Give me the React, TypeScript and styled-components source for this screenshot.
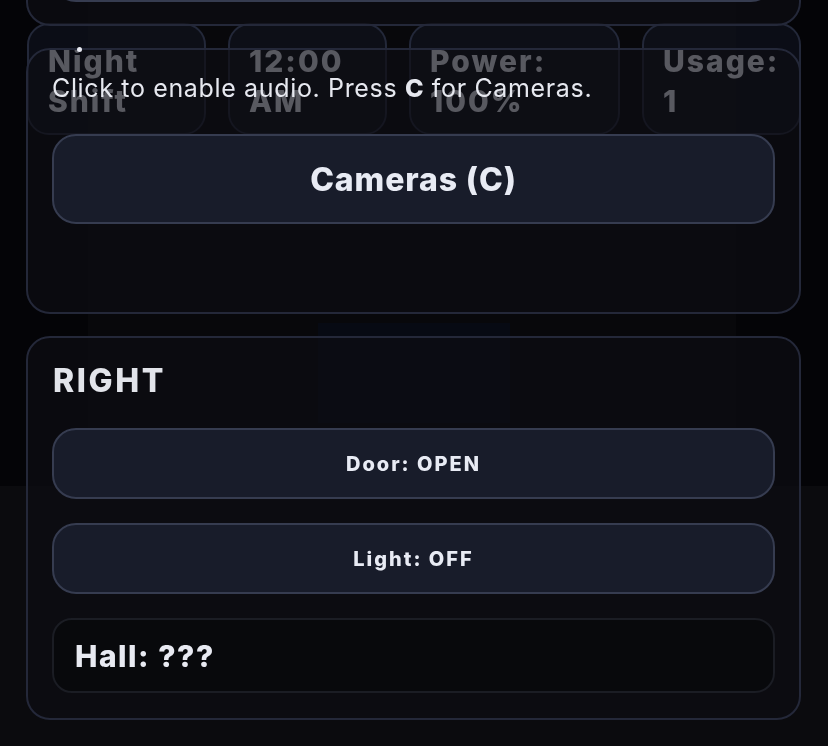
import React from "react";
import styled, { createGlobalStyle } from "styled-components";

const Global = createGlobalStyle`
  html, body { margin: 0; padding: 0; background: #040407; }
  body { font-family: Inter, "Noto Sans", "Liberation Sans", sans-serif; color: #e8eaf2; overflow: hidden; }
  * { box-sizing: border-box; }
`;

const Scene = styled.svg`
  position: fixed;
  inset: 0;
  width: 828px;
  height: 746px;
  z-index: 0;
`;

const Page = styled.main`
  position: relative;
  z-index: 1;
  height: 746px;
  padding: 0 27px 0 26px;
  display: flex;
  flex-direction: column;
`;

const Panel = styled.section`
  position: relative;
  z-index: 2;
  border: 2px solid #242839;
  border-radius: 24px;
  background: rgba(13, 14, 19, 0.66);
  padding: 24px;
  display: flex;
  flex-direction: column;
`;

const TopPanel = styled(Panel)`
  margin-top: -140px;
  height: 166px;
  justify-content: flex-end;
  padding-bottom: 22px;
`;

const CamPanel = styled(Panel)`
  margin-top: 22px;
  padding: 24px 24px 88px 24px;
`;

const SidePanel = styled(Panel)`
  margin-top: 22px;
  padding-bottom: 25px;
`;

const Hud = styled.div`
  position: absolute;
  z-index: 1;
  top: 23px;
  left: 27px;
  width: 774px;
  display: grid;
  grid-template-columns: 179fr 159fr 211fr 159fr;
  gap: 22px;
`;

const Stat = styled.div`
  height: 112px;
  border: 2px solid #232839;
  border-radius: 22px;
  background: rgba(18, 21, 34, 0.55);
  padding: 16px 19px;
  font-size: 30px;
  font-weight: 800;
  line-height: 40px;
  letter-spacing: 2px;
  color: #e8eaf2;
  overflow: hidden;
`;

const Hint = styled.p`
  margin: 0;
  font-size: 25px;
  line-height: 29px;
  font-weight: 400;
  letter-spacing: 0.65px;
  color: #e6e8ef;
`;

const Key = styled.b`
  font-weight: 800;
`;

const Dot = styled.span`
  position: absolute;
  top: -3px;
  left: 49px;
  width: 5px;
  height: 5px;
  border-radius: 50%;
  background: #e8eaf2;
`;

const ActionButton = styled.button<{ $big?: boolean }>`
  display: flex;
  align-items: center;
  justify-content: center;
  width: 100%;
  height: ${(p) => (p.$big ? 90 : 71)}px;
  border: 2px solid #363c50;
  border-radius: 24px;
  background: #181c2a;
  color: #e8ebf4;
  font-family: inherit;
  font-size: ${(p) => (p.$big ? 32 : 20)}px;
  font-weight: 800;
  letter-spacing: ${(p) => (p.$big ? 0.9 : 2)}px;
  padding: 0;
`;

const CamButton = styled(ActionButton)`
  margin-top: 31px;
`;

const Heading = styled.h2`
  margin: 0 0 28px 1px;
  font-size: 32px;
  line-height: 38px;
  font-weight: 800;
  letter-spacing: 2.6px;
  color: #e2e4ea;
`;

const Stack = styled.div`
  display: flex;
  flex-direction: column;
  gap: 24px;
`;

const Readout = styled.div`
  height: 75px;
  border: 2px solid #1b1d24;
  border-radius: 20px;
  background: #08090c;
  display: flex;
  align-items: center;
  padding: 0 21px;
  font-size: 30px;
  font-weight: 800;
  letter-spacing: 1.5px;
  color: #e8eaf2;
`;

export default function App() {
  const stats = ["Night Shift", "12:00 AM", "Power: 100%", "Usage: 1"];
  return (
    <>
      <Global />
      <Scene viewBox="0 0 828 746" aria-hidden>
        <rect x="0" y="0" width="828" height="746" fill="#040407" />
        <rect x="88" y="0" width="648" height="486" fill="#08080b" />
        <rect x="0" y="486" width="828" height="260" fill="#0b0b0e" />
        <rect x="318" y="323" width="192" height="100" fill="#070a13" />
      </Scene>
      <Page>
        <Hud>
          {stats.map((s) => (
            <Stat key={s}>{s}</Stat>
          ))}
        </Hud>
        <TopPanel>
          <ActionButton $big aria-hidden tabIndex={-1} />
        </TopPanel>
        <CamPanel>
          <Dot />
          <Hint>
            Click to enable audio. Press <Key>C</Key> for Cameras.
          </Hint>
          <CamButton $big>Cameras (C)</CamButton>
        </CamPanel>
        <SidePanel>
          <Heading>RIGHT</Heading>
          <Stack>
            <ActionButton>Door: OPEN</ActionButton>
            <ActionButton>Light: OFF</ActionButton>
            <Readout>Hall: ???</Readout>
          </Stack>
        </SidePanel>
      </Page>
    </>
  );
}
